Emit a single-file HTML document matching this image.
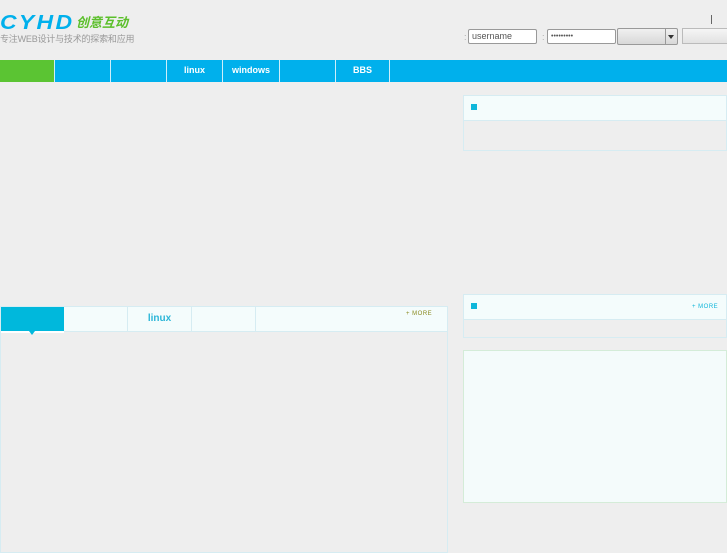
<!DOCTYPE html><html><head><meta charset="utf-8"><style>
body{margin:0;width:727px;height:545px;background:#eeeeee;position:relative;overflow:hidden;font-family:"Liberation Sans","Noto Sans CJK SC",sans-serif}
.a{position:absolute}
.nav{left:0;top:60px;width:727px;height:22px;background:#00b0ec}
.nd{top:60px;width:1px;height:22px;background:#cdeefa}
.nt{top:60px;height:22px;line-height:21px;color:#fff;font-size:9px;font-weight:bold;text-align:center}
.box{border:1px solid #d6ecf2;background:#eeeeee}
.hd{background:#f4fcfc;border-bottom:1px solid #d6ecf2}
.sq{width:6px;height:6px;background:#0fb6da}
.more{font-size:6px;color:#0fb6da;letter-spacing:.5px}
</style></head><body>
<div class="a" style="left:0;top:12px;font-size:20px;line-height:22px;font-weight:900;font-style:italic;color:#00b0ec;letter-spacing:2px;transform:scaleX(1.15);transform-origin:left">CYHD</div>
<div class="a" style="left:76px;top:15px;font-size:13px;line-height:16px;font-weight:bold;font-style:italic;color:#5bbf2a">创意互动</div>
<div class="a" style="left:0;top:33px;font-size:9px;line-height:12px;color:#999;letter-spacing:-0.2px">专注WEB设计与技术的探索和应用</div>
<div class="a" style="left:711px;top:15px;width:1px;height:9px;background:#666"></div>
<div class="a" style="left:464px;top:32px;font-size:9px;color:#aaa">:</div>
<div class="a" style="left:468px;top:29px;height:13px;border:1px solid #999;background:#fff;border-radius:2px;font-size:9px;color:#555;line-height:13px;padding-left:3px;width:64px">username</div>
<div class="a" style="left:542px;top:32px;font-size:9px;color:#aaa">:</div>
<div class="a" style="left:547px;top:29px;width:64px;height:13px;border:1px solid #999;background:#fff;border-radius:2px;font-size:7px;color:#555;line-height:13px;padding-left:3px">•••••••••</div>
<div class="a" style="left:617px;top:28px;width:59px;height:15px;border:1px solid #999;background:linear-gradient(#f0f0f0,#d8d8d8);border-radius:2px"></div>
<div class="a" style="left:665px;top:29px;width:1px;height:15px;background:#999"></div>
<div class="a" style="left:668px;top:35px;border-left:3px solid transparent;border-right:3px solid transparent;border-top:4px solid #333"></div>
<div class="a" style="left:682px;top:28px;width:44px;height:14px;border:1px solid #bbb;background:linear-gradient(#f5f5f5,#e2e2e2)"></div>
<div class="a nav"></div>
<div class="a" style="left:0;top:60px;width:54px;height:22px;background:#5bc433"></div>
<div class="a nd" style="left:54px"></div><div class="a nd" style="left:110px"></div><div class="a nd" style="left:166px"></div><div class="a nd" style="left:222px"></div><div class="a nd" style="left:279px"></div><div class="a nd" style="left:335px"></div><div class="a nd" style="left:389px"></div>
<div class="a nt" style="left:167px;width:55px">linux</div>
<div class="a nt" style="left:223px;width:56px">windows</div>
<div class="a nt" style="left:336px;width:53px">BBS</div>

<div class="a box" style="left:0;top:306px;width:446px;height:245px"></div>
<div class="a hd" style="left:1px;top:307px;width:446px;height:24px"></div>
<div class="a" style="left:1px;top:307px;width:63px;height:24px;background:#00b8dc"></div>
<div class="a" style="left:1px;top:331px;width:63px;height:2px;background:#fff"></div>
<div class="a" style="left:29px;top:331px;border-left:3px solid transparent;border-right:3px solid transparent;border-top:4px solid #00b8dc"></div>
<div class="a" style="left:127px;top:307px;width:1px;height:24px;background:#d6ecf2"></div>
<div class="a" style="left:191px;top:307px;width:1px;height:24px;background:#d6ecf2"></div>
<div class="a" style="left:255px;top:307px;width:1px;height:24px;background:#d6ecf2"></div>
<div class="a" style="left:128px;top:313px;width:63px;text-align:center;font-size:10px;font-weight:bold;color:#2cb6d8">linux</div>
<div class="a more" style="left:406px;top:311px;color:#8a8a20">+ MORE</div>

<div class="a box" style="left:463px;top:95px;width:262px;height:54px"></div>
<div class="a hd" style="left:464px;top:96px;width:262px;height:24px"></div>
<div class="a sq" style="left:471px;top:104px"></div>
<div class="a box" style="left:463px;top:294px;width:262px;height:42px"></div>
<div class="a hd" style="left:464px;top:295px;width:262px;height:24px"></div>
<div class="a sq" style="left:471px;top:303px"></div>
<div class="a more" style="left:692px;top:304px">+ MORE</div>
<div class="a" style="left:463px;top:350px;width:262px;height:151px;border:1px solid #d4ecd8;background:#f4fbfb"></div>
</body></html>
